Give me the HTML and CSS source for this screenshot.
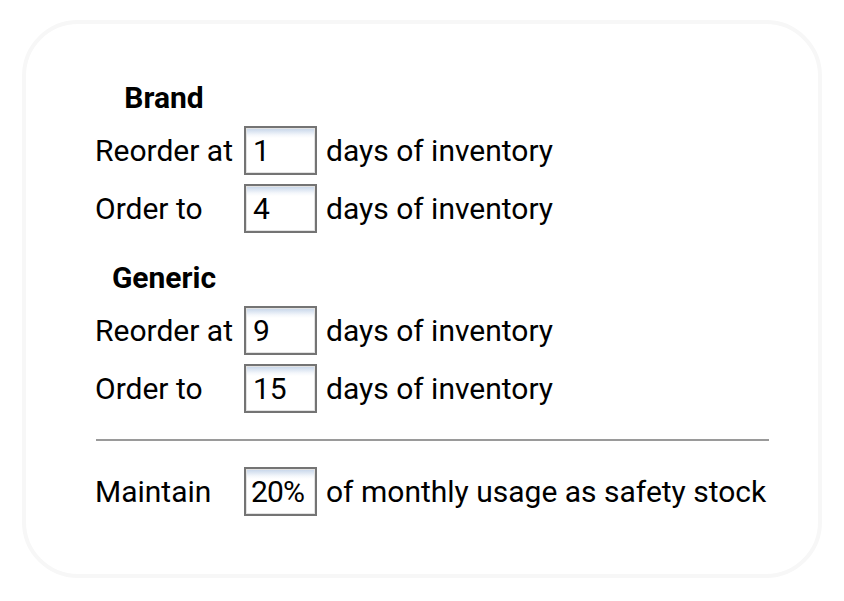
FILE: index.html
```html
<!DOCTYPE html>
<html>
<head>
<meta charset="utf-8">
<link rel="stylesheet" href="styles.css">
</head>
<body>
<div class="card">
  <div class="section">
    <div class="heading">Brand</div>
    <div class="row"><span class="label">Reorder at</span><span class="box">1</span><span class="after">days of inventory</span></div>
    <div class="row"><span class="label">Order to</span><span class="box">4</span><span class="after">days of inventory</span></div>
  </div>
  <div class="section second">
    <div class="heading">Generic</div>
    <div class="row"><span class="label">Reorder at</span><span class="box">9</span><span class="after">days of inventory</span></div>
    <div class="row"><span class="label">Order to</span><span class="box">15</span><span class="after">days of inventory</span></div>
  </div>
  <div class="rule"></div>
  <div class="row safety"><span class="label">Maintain</span><span class="box pct">20%</span><span class="after">of monthly usage as safety stock</span></div>
</div>
</body>
</html>
```
FILE: styles.css
```css
html, body {
  margin: 0;
  padding: 0;
  background: #ffffff;
}
body {
  font-family: Roboto, "Liberation Sans", sans-serif;
  font-size: 30px;
  color: #000;
}
.card {
  box-sizing: border-box;
  margin: 20px 22px 0 22px;
  height: 558px;
  border: 4px solid #f7f7f7;
  border-radius: 56px;
  padding: 57px 0 0 69px;
}
.section {
  display: flex;
  flex-direction: column;
  gap: 9px;
}
.section.second {
  margin-top: 28px;
}
.heading {
  width: 138px;
  text-align: center;
  font-weight: bold;
  line-height: 34px;
  height: 34px;
  margin-bottom: 2px;
}
.row {
  display: flex;
  align-items: center;
  height: 49px;
}
.label {
  width: 149px;
  flex: none;
}
.box {
  box-sizing: border-box;
  width: 73px;
  height: 49px;
  border: 2px solid #747474;
  box-shadow: inset 0 0 0 1px #e2e2e2;
  background: linear-gradient(#c3d3e8 0px, #f4f7fb 7px, #ffffff 10px);
  padding-left: 7px;
  line-height: 45px;
  flex: none;
}
.box.pct {
  padding-left: 5px;
  letter-spacing: -0.8px;
}
.after {
  margin-left: 9px;
  white-space: nowrap;
}
.rule {
  margin: 26px 0 0 1px;
  width: 673px;
  height: 2px;
  background: #9a9a9a;
}
.safety {
  margin-top: 26px;
}
```
